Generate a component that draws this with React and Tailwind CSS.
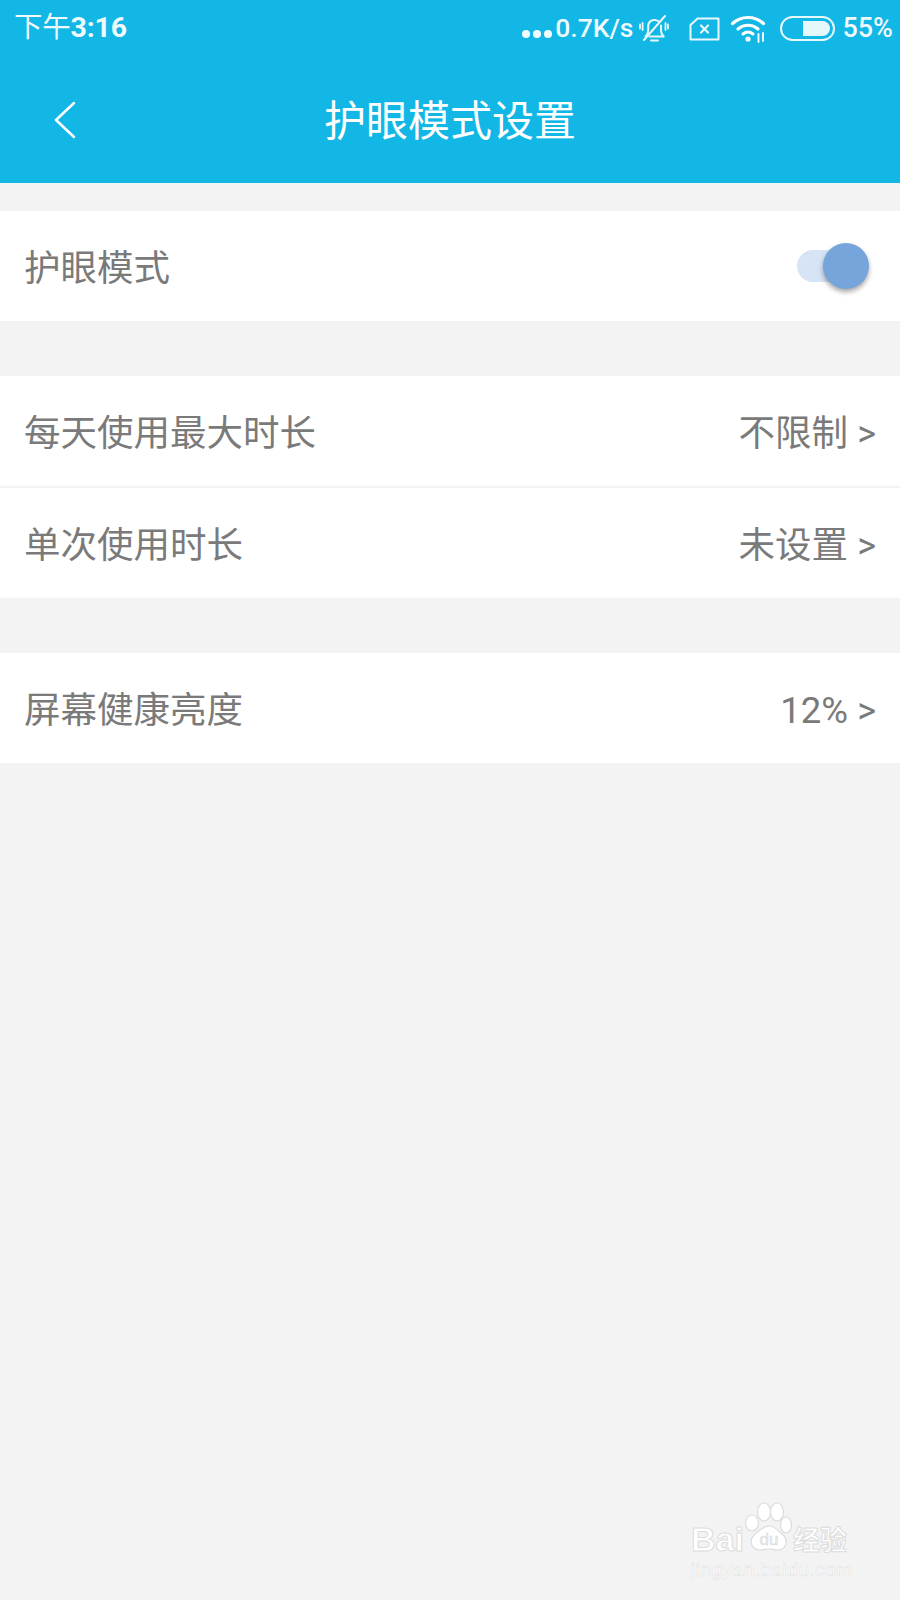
const CJK = "font-['Roboto','Noto_Sans_CJK_SC',sans-serif]";

function BellOff() {
  return (
    <svg width="30" height="30" viewBox="0 0 30 30" fill="none" stroke="white" strokeWidth="2" strokeLinecap="round" strokeLinejoin="round" className="opacity-90">
      <path d="M6.500 22.500c1.800-1.600 2.700-3.400 2.700-6v-4c0-3.400 2.300-6 5.600-6.500 1.800-.3 3.400.2 4.800 1.300" />
      <path d="M22 11.500v5c0 2.600.9 4.400 2.700 6H10.500" />
      <path d="M12 26.500h7" />
      <path d="M5 26L26 2" />
      <path d="M3.600 9v7M1 10.500v4M26.500 9v7M29 10.500v4" strokeWidth="1.800" />
    </svg>
  );
}

function SimX() {
  return (
    <svg width="31" height="24" viewBox="0 0 31 24" fill="none" stroke="white" strokeWidth="2" strokeLinejoin="round" strokeLinecap="round" className="opacity-90">
      <path d="M8.500 1.500H29.500v21H1.500V8z" />
      <path d="M12 8.500l7 7M19 8.500l-7 7" strokeWidth="2.200" />
    </svg>
  );
}

function Wifi() {
  return (
    <svg width="36" height="28" viewBox="0 0 36 28" fill="none" stroke="white" strokeLinecap="round">
      <path d="M1.500 8.500C10.500 .5 23.500 .5 32.500 8.500" strokeWidth="3.200" />
      <path d="M7 14c6-5 14-5 20 0" strokeWidth="3.200" />
      <path d="M12 19c3-2.400 7-2.400 10 0" strokeWidth="3" />
      <circle cx="17" cy="24" r="2.600" fill="white" stroke="none" />
      <path d="M27.500 19v8M32 18v8" strokeWidth="1.800" />
    </svg>
  );
}

function Battery() {
  return (
    <div className="w-[55px] h-[25px] rounded-full border-2 border-white/90 flex items-center justify-end pr-[3px]">
      <div className="w-[27px] h-[15px] bg-white/90 rounded-l-[3px] rounded-r-full" />
    </div>
  );
}

function Dots() {
  return (
    <div className="flex items-center gap-[3px] mt-[10px] mr-[3px]">
      <div className="w-[8px] h-[8px] rounded-full bg-white/95" />
      <div className="w-[8px] h-[8px] rounded-full bg-white/95" />
      <div className="w-[8px] h-[8px] rounded-full bg-white/95" />
    </div>
  );
}

function StatusBar() {
  return (
    <div className="h-[57px] flex items-center justify-between pl-[14px] pr-[7px] text-white/95">
      <span className="text-[28.500px] leading-none tracking-[-0.2px]">
        下午<span className="font-bold">3:16</span>
      </span>
      <div className="flex items-center">
        <Dots />
        <span className="text-[26.500px] font-medium leading-none">0.7K/s</span>
        <span className="ml-[6px]"><BellOff /></span>
        <span className="ml-[20px]"><SimX /></span>
        <span className="ml-[11px]"><Wifi /></span>
        <span className="ml-[13px]"><Battery /></span>
        <span className="ml-[7px] text-[27px] font-medium leading-none">55%</span>
      </div>
    </div>
  );
}

function Row({ label, value, children }) {
  return (
    <div className="h-[110px] bg-white flex items-center justify-between pl-[24px] pr-[24px]">
      <span className="text-[36.500px] text-[#7a7a7a] leading-none mt-[6px]">{label}</span>
      {value && (
        <span className="text-[36.500px] text-[#7a7a7a] leading-none mt-[6px]">
          {value} <span className="text-[36px]">&gt;</span>
        </span>
      )}
      {children}
    </div>
  );
}

function Toggle() {
  return (
    <div className="relative w-[64px] h-[32px] mr-[15px] rounded-full bg-[#d6e4f5]">
      <div className="absolute right-[-8px] top-[-7px] w-[46px] h-[46px] rounded-full bg-[#76a5db] shadow-[0_3px_5px_rgba(0,0,0,0.35)]" />
    </div>
  );
}

function Watermark() {
  return (
    <div className="absolute left-[691px] top-[1502px] w-[165px] select-none">
      <div className="flex items-end h-[50px]">
        <span className="text-[34px] font-bold leading-none mb-[-4px] text-white [-webkit-text-stroke:1px_#dcdcdc] font-['Liberation_Sans',sans-serif]">Bai</span>
        <svg width="48" height="50" viewBox="0 0 48 50" fill="white" stroke="#dcdcdc" strokeWidth="1.200">
          <ellipse cx="8" cy="21" rx="6.500" ry="8" />
          <ellipse cx="20" cy="10" rx="6.500" ry="9" />
          <ellipse cx="33" cy="10" rx="6.500" ry="9" />
          <ellipse cx="42" cy="23" rx="5.500" ry="8" />
          <path d="M25 24c6 0 9 5 14 9 6 5 3 15-5 15-4 0-6-1-9-1s-5 1-9 1c-8 0-12-9-6-15 5-4 9-9 15-9z" />
          <text x="25" y="43" textAnchor="middle" fontSize="17" fontFamily="Liberation Sans" fill="#ececec" stroke="#d8d8d8" strokeWidth="0.500">du</text>
        </svg>
        <span className="ml-[1px] text-[27px] font-bold leading-none mb-[-3px] text-white [-webkit-text-stroke:1px_#dcdcdc]">经验</span>
      </div>
      <div className="mt-[8px] text-[19px] leading-none tracking-[0.5px] text-white [-webkit-text-stroke:0.5px_#dedede] font-['Liberation_Sans',sans-serif]">jingyan.baidu.com</div>
    </div>
  );
}

export default function App() {
  return (
    <div className={`relative w-[900px] h-[1600px] bg-[#f3f3f3] overflow-hidden ${CJK}`}>
      <header className="h-[183px] bg-[#12b7e6]">
        <StatusBar />
        <div className="relative h-[126px] flex items-center justify-center">
          <svg width="24" height="38" viewBox="0 0 24 38" fill="none" stroke="white" strokeWidth="2.500" strokeLinecap="round" strokeLinejoin="round" className="absolute left-[53px] top-[44px]">
            <path d="M21 2L3 19l18 17" />
          </svg>
          <h1 className="text-[42px] font-normal text-white leading-none mt-[4px]">护眼模式设置</h1>
        </div>
      </header>

      <div className="mt-[28px]">
        <Row label="护眼模式">
          <Toggle />
        </Row>
      </div>

      <div className="mt-[55px]">
        <Row label="每天使用最大时长" value="不限制" />
        <div className="h-[2px] bg-[#f3f3f3]" />
        <Row label="单次使用时长" value="未设置" />
      </div>

      <div className="mt-[55px]">
        <Row label="屏幕健康亮度" value="12%" />
      </div>

      <Watermark />
    </div>
  );
}
